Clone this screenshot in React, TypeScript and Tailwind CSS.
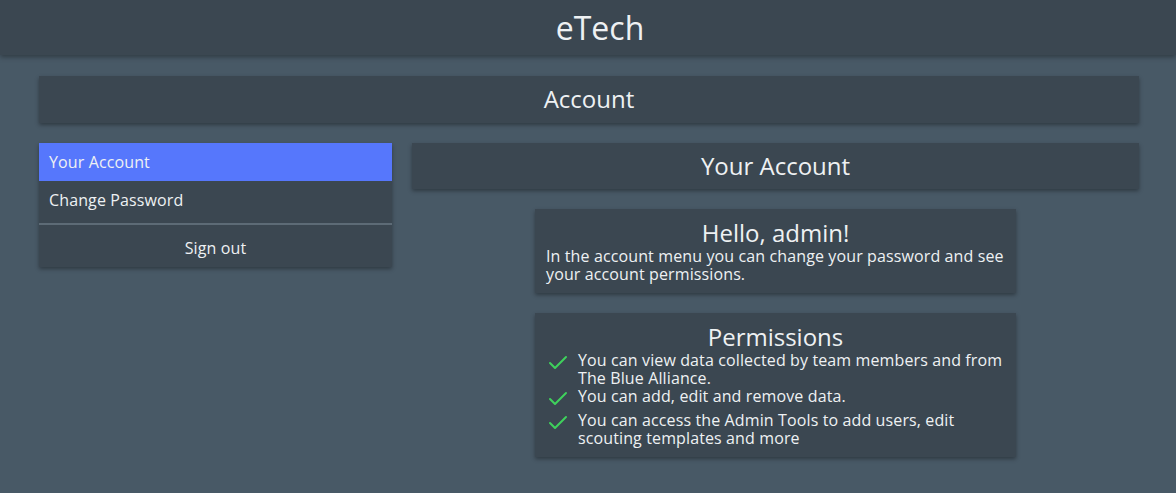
import React from 'react';
import { Check } from 'lucide-react';

const permissions = [
  'You can view data collected by team members and from The Blue Alliance.',
  'You can add, edit and remove data.',
  'You can access the Admin Tools to add users, edit scouting templates and more',
];

const cardShadow = 'shadow-[0_2px_4px_rgba(0,0,0,0.35)]';

const App: React.FC = () => {
  return (
    <div
      className="min-h-screen bg-[#485966] text-[#eef1f3]"
      style={{ fontFamily: '"Open Sans", "Noto Sans", sans-serif' }}
    >
      <header className="h-[55px] bg-[#3b4751] flex items-center justify-center pl-[24px] shadow-[0_2px_5px_rgba(0,0,0,0.35)] relative">
        <h1 className="text-[32px] leading-none pt-[1px]">eTech</h1>
      </header>

      <main className="pl-[39px] pr-[37px] pt-[21px] tracking-[0.12px]">
        <div className={`h-[47px] bg-[#3b4751] flex items-center justify-center ${cardShadow}`}>
          <h2 className="text-[24px] leading-none pb-[1px] tracking-normal">Account</h2>
        </div>

        <div className="flex gap-[20px] mt-[20px]">
          <nav className={`w-[353px] shrink-0 self-start bg-[#3b4751] ${cardShadow}`}>
            <div className="bg-[#5677fc] px-[10px] py-[10px] text-[16px] leading-[18px]">Your Account</div>
            <div className="px-[10px] pt-[10px] pb-[14px] text-[16px] leading-[18px]">Change Password</div>
            <div className="h-[2px] bg-[#5d6b76]" />
            <div className="h-[42px] flex items-center justify-center text-[16px] leading-[18px] pt-[3px]">Sign out</div>
          </nav>

          <section className="flex-1 flex flex-col items-center">
            <div className={`w-full h-[46px] bg-[#3b4751] flex items-center justify-center ${cardShadow}`}>
              <h2 className="text-[24px] leading-none pb-[1px] tracking-normal">Your Account</h2>
            </div>

            <div className={`w-[481px] mt-[20px] bg-[#3b4751] px-[11px] pt-[10px] pb-[10px] ${cardShadow}`}>
              <h3 className="text-[24px] leading-[28px] text-center tracking-normal">Hello, admin!</h3>
              <p className="text-[16px] leading-[18px]">
                In the account menu you can change your password and see your account permissions.
              </p>
            </div>

            <div className={`w-[481px] mt-[20px] bg-[#3b4751] px-[11px] pt-[10px] pb-[10px] ${cardShadow}`}>
              <h3 className="text-[24px] leading-[28px] text-center tracking-normal">Permissions</h3>
              <ul>
                {permissions.map((p) => (
                  <li key={p} className="flex items-start">
                    <span className="w-6 h-6 shrink-0 mr-[8px] flex items-center justify-center">
                      <Check size={24} strokeWidth={2} className="text-[#3fd15c]" />
                    </span>
                    <span className="text-[16px] leading-[18px]">{p}</span>
                  </li>
                ))}
              </ul>
            </div>
          </section>
        </div>
      </main>
    </div>
  );
};

export default App;
